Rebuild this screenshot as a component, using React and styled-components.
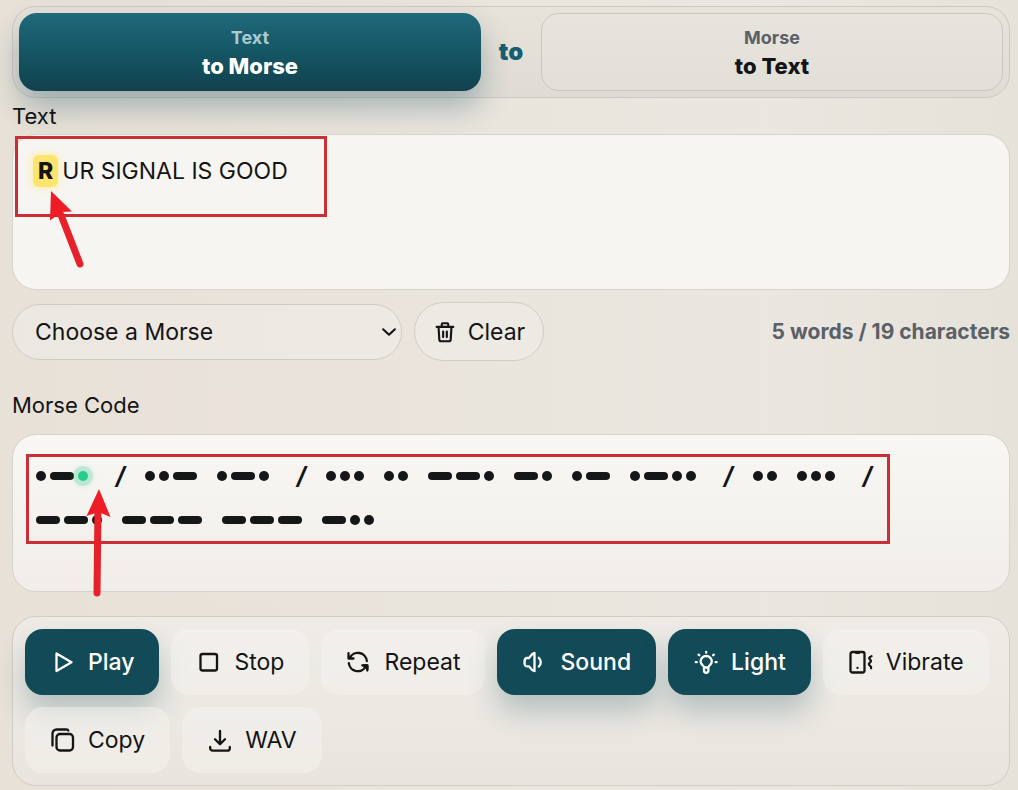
import React from "react";
import styled, { createGlobalStyle, css } from "styled-components";

const GlobalStyle = createGlobalStyle`
  *, *::before, *::after { box-sizing: border-box; }
  body {
    margin: 0;
    min-height: 100vh;
    background:
      radial-gradient(circle at 22% 52%, rgba(238, 226, 220, 0.35), transparent 30%),
      linear-gradient(90deg, #e7e1d7 0%, #e9e4dc 40%, #ebe7e0 75%, #e5e2da 100%);
    color: #141414;
    font-family: Inter, "Liberation Sans", sans-serif;
  }
  button, select, textarea { font: inherit; color: inherit; margin: 0; }
`;

const Page = styled.main`
  display: flex;
  flex-direction: column;
  padding: 6px 8px 4px 12px;
`;

const ModeSwitch = styled.div`
  display: grid;
  grid-template-columns: 1fr 60px 1fr;
  align-items: center;
  padding: 6px;
  border: 1px solid #cdc9c2;
  border-radius: 24px;
  background: linear-gradient(180deg, #e7e2da, #e0dcd5);
`;

const ModeButton = styled.button`
  display: flex;
  flex-direction: column;
  align-items: center;
  justify-content: center;
  height: 78px;
  border: 1px solid #cac8c1;
  border-radius: 18px;
  background: linear-gradient(180deg, #e7e4dd, #e2dfd8);
  font-size: 22px;
  line-height: 28px;
  font-weight: 800;
  ${(p) =>
    p.$active &&
    css`
      border-color: transparent;
      background: linear-gradient(180deg, #1f697b 0%, #165866 45%, #11414e 100%) border-box;
      color: #fff;
      box-shadow: 0 16px 30px rgba(17, 73, 86, 0.32);
    `}
`;

const ModeSource = styled.span`
  font-size: 18px;
  line-height: 28px;
  font-weight: 700;
  color: ${(p) => (p.$active ? "#a9cad0" : "#5b6067")};
`;

const ModeJoin = styled.span`
  text-align: center;
  font-size: 24px;
  line-height: 28px;
  font-weight: 900;
  color: #12606f;
`;

const FieldLabel = styled.label`
  position: relative;
  font-size: 22px;
  line-height: 36px;
`;

const Surface = styled.div`
  position: relative;
  border: 1px solid #d6d3cc;
  border-radius: 24px;
  background: ${(p) => (p.$fade ? "linear-gradient(180deg, #f9f7f3, #f1eeea)" : "#f7f5f2")};
`;

const TextInput = styled.textarea`
  display: block;
  width: 100%;
  height: 154px;
  padding: 18px 24px 18px 28px;
  border: 0;
  outline: 0;
  resize: none;
  border-radius: 24px;
  background: transparent;
  font-size: 23px;
  line-height: 36px;
`;

const ActiveLetter = styled.mark`
  position: absolute;
  top: 20px;
  left: 20px;
  width: 25px;
  border-radius: 6px;
  background: #fbe56f;
  box-shadow: 0 0 6px 2px rgba(253, 236, 140, 0.6);
  color: #141414;
  text-align: center;
  font-size: 23px;
  line-height: 32px;
  font-weight: 800;
  pointer-events: none;
`;

const Outline = styled.div`
  position: absolute;
  border: 3px solid #c92f36;
  pointer-events: none;
  top: ${(p) => p.$top}px;
  left: ${(p) => p.$left}px;
  width: ${(p) => p.$width}px;
  height: ${(p) => p.$height}px;
`;

const Arrow = styled.svg`
  position: absolute;
  z-index: 1;
  top: ${(p) => p.$top}px;
  left: ${(p) => p.$left}px;
  overflow: visible;
  pointer-events: none;
`;

const Tools = styled.div`
  display: flex;
  align-items: center;
  gap: 12px;
  padding: 12px 0 26px;
`;

const SelectWrap = styled.div`
  display: grid;
  align-items: center;
  flex: 0 1 390px;
  & > * { grid-area: 1 / 1; }
  & > svg { justify-self: end; margin-right: 4px; pointer-events: none; }
`;

const Select = styled.select`
  appearance: none;
  width: 100%;
  height: 56px;
  padding: 0 32px 0 22px;
  border: 1px solid #d0ccc5;
  border-radius: 28px;
  background: linear-gradient(90deg, #ebe8e1, #eee8e2 60%, #edeae4);
  font-size: 23px;
`;

const ClearButton = styled.button`
  display: flex;
  align-items: center;
  justify-content: center;
  gap: 11px;
  width: 130px;
  height: 59px;
  padding: 0;
  border: 1px solid #d0cdc6;
  border-radius: 30px;
  background: #edeae4;
  font-size: 23px;
`;

const Count = styled.p`
  margin: 0 0 0 auto;
  font-size: 21px;
  font-weight: 700;
  color: #5b6067;
`;

const MorseOutput = styled.div`
  display: flex;
  flex-wrap: wrap;
  align-content: flex-start;
  column-gap: 20px;
  height: 156px;
  padding: 19px 23px;
`;

const Word = styled.span`
  display: flex;
  align-items: center;
  gap: 20px;
  height: 44px;
`;

const Letter = styled.span`
  display: flex;
  align-items: center;
  gap: 4px;
`;

const Signal = styled.i`
  width: ${(p) => (p.$dash ? 24 : 10)}px;
  height: ${(p) => (p.$dash ? 8 : 10)}px;
  border-radius: 5px;
  background: #151617;
  ${(p) =>
    p.$active &&
    css`
      background: #27cb8b;
      box-shadow: 0 0 0 5px rgba(39, 203, 139, 0.2), 0 0 4px 6px rgba(39, 203, 139, 0.12);
    `}
`;

const Slash = styled.span`
  width: 17px;
  text-align: right;
  font-size: 24px;
  line-height: 44px;
  font-weight: 700;
  font-style: italic;
`;

const Panel = styled.div`
  display: flex;
  flex-wrap: wrap;
  gap: 12px;
  margin-top: 24px;
  padding: 12px;
  border: 1px solid #d0cdc6;
  border-radius: 24px;
  background: linear-gradient(180deg, #efece7, #e9e5de);
`;

const ActionButton = styled.button`
  display: flex;
  align-items: center;
  gap: 12px;
  height: 66px;
  padding: 0 24px;
  border: 1px solid transparent;
  border-radius: 18px;
  background: rgba(246, 244, 240, 0.5);
  font-size: 23px;
  ${(p) =>
    p.$active &&
    css`
      background: #124a58;
      color: #fff;
      font-weight: 500;
      box-shadow: 0 16px 28px rgba(17, 73, 86, 0.25);
    `}
`;

const MorseField = styled.section`
  display: flex;
  flex-direction: column;
  gap: 11px;
`;

const Glyph = ({ children, size = 26, width = 2.3 }) => (
  <svg
    width={size}
    height={size}
    viewBox="0 0 26 26"
    fill="none"
    stroke="currentColor"
    strokeWidth={width}
    strokeLinecap="round"
    strokeLinejoin="round"
    aria-hidden="true"
  >
    {children}
  </svg>
);

const icons = {
  Play: <path d="M6.500 4.500v17.500L21.500 13.200z" />,
  Stop: <rect x="4.500" y="5" width="16.500" height="16.500" rx="2" />,
  Repeat: (
    <>
      <path d="M2.500 4.200v5.300H7.500M3.800 8.800A9 9 0 0 1 20.800 12M21.300 21.600v-5.300H16.300M19.900 17A9 9 0 0 1 2.800 14.200" />
      <path d="M17.500 16.500l3.800 3.500v-3.500z" fill="currentColor" />
    </>
  ),
  Sound: (
    <path d="M12.500 4v18.200c-3.400-.7-4.200-4-5.500-4.800H5c-2 0-2.500-1.500-2.500-4.200S3 9 5 9h2C8.300 8.200 9.100 4.700 12.500 4zM16.800 8.800c2.600 2.300 2.600 6.500 0 8.800" />
  ),
  Light: (
    <>
      <path d="M11 18.500c0-2-3.400-2.700-3.400-5.900a5.600 5.600 0 0 1 11.200 0c0 3.200-3.400 3.900-3.400 5.900zM11 18.500v3.100a2.200 2.200 0 0 0 4.400 0v-3.100" />
      <path d="M13.200 2.800v.9M2.800 13.200h1M22.600 13.200h1M5.600 5.600l.7.700M20.800 5.600l-.7.700" />
    </>
  ),
  Vibrate: (
    <>
      <rect x="2.500" y="3" width="14" height="20.500" rx="2" />
      <path d="M8 3.800h3" />
      <path d="M9.500 18.800v.1" />
      <path d="M23.500 7.200q-3.600 1.400-1.600 3.200 2 1.600 0 3.200-2.200 1.500 0 3 1.700 1.200 1.200 2.600" />
    </>
  ),
  Copy: (
    <>
      <rect x="6.500" y="7" width="16.500" height="16.500" rx="3.500" />
      <path d="M2.500 18.500V6.500a4 4 0 0 1 4-4h10q1.500 0 1.800 1" />
    </>
  ),
  WAV: <path d="M13 4v13M8 12.300l5 5 5-5M3.200 20v1.200a2.500 2.500 0 0 0 2.500 2.500h14.600a2.500 2.500 0 0 0 2.500-2.500V20" />,
};

const actions = [
  ["Play", true],
  ["Stop"],
  ["Repeat"],
  ["Sound", true],
  ["Light", true],
  ["Vibrate"],
  ["Copy"],
  ["WAV"],
];

const morse = [".-.", "..- .-.", "... .. --. -. .- .-..", ".. ...", "--. --- --- -.."];

export default function App() {
  return (
    <>
      <GlobalStyle />
      <Page>
        <ModeSwitch>
          <ModeButton $active type="button" aria-pressed="true">
            <ModeSource $active>Text</ModeSource>
            to Morse
          </ModeButton>
          <ModeJoin>to</ModeJoin>
          <ModeButton type="button" aria-pressed="false">
            <ModeSource>Morse</ModeSource>
            to Text
          </ModeButton>
        </ModeSwitch>

        <FieldLabel htmlFor="plain-text">Text</FieldLabel>
        <Surface>
          <TextInput id="plain-text" spellCheck="false" defaultValue="R UR SIGNAL IS GOOD" />
          <ActiveLetter aria-hidden="true">R</ActiveLetter>
          <Outline $top={1} $left={2} $width={312} $height={81} />
          <Arrow $top={56} $left={35} width="36" height="80" viewBox="0 0 36 80">
            <path d="M13 24L32 73" stroke="#e62129" strokeWidth="7" strokeLinecap="round" />
            <path d="M3 0L24 20.500L14 21L2 29.500Z" fill="#ee1c25" />
          </Arrow>
        </Surface>

        <Tools>
          <SelectWrap>
            <Select aria-label="Choose a Morse" defaultValue="">
              <option value="">Choose a Morse</option>
              <option value="sos">SOS</option>
            </Select>
            <Glyph size={18} width={3}>
              <path d="M4.500 9l8.500 8L21.500 9" />
            </Glyph>
          </SelectWrap>
          <ClearButton type="button">
            <Glyph size={24}>
              <path d="M4 7.500h18M9.500 7.500V4.500q0-1 1-1h5q1 0 1 1v3M6 7.500l.8 13.500q.1 2 2 2h8.400q1.900 0 2-2L20 7.500M11 12.500v6M15 12.500v6" />
            </Glyph>
            Clear
          </ClearButton>
          <Count>5 words / 19 characters</Count>
        </Tools>

        <MorseField>
          <FieldLabel id="morse-label" as="div">
            Morse Code
          </FieldLabel>
          <Surface $fade>
            <MorseOutput role="img" aria-labelledby="morse-label">
              {morse.map((word, w) => (
                <Word key={w}>
                  {word.split(" ").map((letter, l) => (
                    <Letter key={l}>
                      {[...letter].map((mark, m) => (
                        <Signal key={m} $dash={mark === "-"} $active={w === 0 && l === 0 && m === 2} />
                      ))}
                    </Letter>
                  ))}
                  {w < morse.length - 1 && <Slash>/</Slash>}
                </Word>
              ))}
            </MorseOutput>
            <Outline $top={19} $left={13} $width={864} $height={90} />
            <Arrow $top={54} $left={73} width="26" height="110" viewBox="0 0 26 110">
              <path d="M12 20L11 104" stroke="#e62129" strokeWidth="7" strokeLinecap="round" />
              <path d="M13 0L24.500 28L12.500 23L.500 27Z" fill="#ee1c25" />
            </Arrow>
          </Surface>
        </MorseField>

        <Panel>
          {actions.map(([name, active]) => (
            <ActionButton key={name} type="button" $active={active}>
              <Glyph>{icons[name]}</Glyph>
              {name}
            </ActionButton>
          ))}
        </Panel>
      </Page>
    </>
  );
}
